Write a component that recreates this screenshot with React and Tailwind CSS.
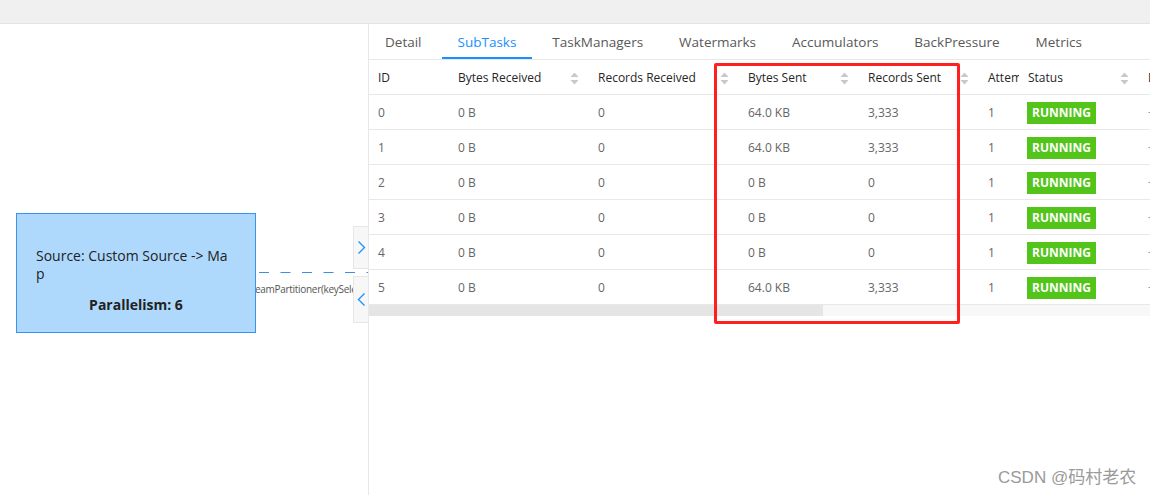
import React from "react";

const F = { fontFamily: '"Open Sans", "Noto Sans", sans-serif' };

function SortIcon() {
  return (
    <svg width="9" height="13" viewBox="0 0 9 13" className="shrink-0">
      <path d="M4.5 0.5 L8.5 5 L0.5 5 Z" fill="#c8c8c8" />
      <path d="M0.5 8 L8.5 8 L4.5 12.5 Z" fill="#c8c8c8" />
    </svg>
  );
}

const cols = [
  { label: "ID", sort: false },
  { label: "Bytes Received", sort: true },
  { label: "Records Received", sort: true },
  { label: "Bytes Sent", sort: true },
  { label: "Records Sent", sort: true },
  { label: "Attempt", sort: false, clip: true },
  { label: "Status", sort: true },
  { label: "Duration", sort: false },
];

const rows = [
  ["0", "0 B", "0", "64.0 KB", "3,333"],
  ["1", "0 B", "0", "64.0 KB", "3,333"],
  ["2", "0 B", "0", "0 B", "0"],
  ["3", "0 B", "0", "0 B", "0"],
  ["4", "0 B", "0", "0 B", "0"],
  ["5", "0 B", "0", "64.0 KB", "3,333"],
];

const tabs = ["Detail", "SubTasks", "TaskManagers", "Watermarks", "Accumulators", "BackPressure", "Metrics"];

const grid = "grid grid-cols-[80px_140px_150px_120px_120px_40px_120px_60px] w-[830px]";

export default function App() {
  return (
    <div className="w-[1150px] h-[495px] bg-white flex flex-col overflow-hidden relative" style={F}>
      <div className="h-[24px] shrink-0 bg-[#f0f0f0] border-b border-[#e4e4e4]" />
      <div className="flex flex-1 min-h-0">
        {/* diagram canvas */}
        <div className="w-[369px] shrink-0 relative overflow-hidden border-r border-[#e8e8e8]">
          <svg className="absolute left-[256px] top-[248px]" width="112" height="1">
            <line x1="3" y1="0.5" x2="112" y2="0.5" stroke="#3a8ee6" strokeWidth="1" strokeDasharray="10 11.5" />
          </svg>
          <div className="absolute left-[255px] top-[258px] text-[10px] tracking-[-0.3px] leading-[14px] text-[#555] whitespace-nowrap">
            eamPartitioner(keySelector)
          </div>
          <div className="absolute left-[16px] top-[189px] w-[240px] h-[120px] bg-[#aed9fd] border border-[#3b93f0] flex flex-col px-[19px] pt-[33px]">
            <div className="text-[14px] leading-[18px] text-[#222]">
              Source: Custom Source -&gt; Ma
              <br />p
            </div>
            <div className="text-[14px] leading-[18px] text-[#222] font-bold text-center mt-[13px]">Parallelism: 6</div>
          </div>
          <div className="absolute left-[353px] top-[202px] w-[16px] h-[43px] bg-[#f7f7f7] border border-[#e6e6e6] border-r-0 flex items-center justify-center">
            <svg width="9" height="15" viewBox="0 0 9 15">
              <path d="M1.5 1.5 L7.5 7.5 L1.5 13.5" fill="none" stroke="#1890ff" strokeWidth="1.3" />
            </svg>
          </div>
          <div className="absolute left-[353px] top-[252px] w-[16px] h-[47px] bg-[#f7f7f7] border border-[#e6e6e6] border-r-0 flex items-center justify-center">
            <svg width="9" height="15" viewBox="0 0 9 15">
              <path d="M7.5 1.5 L1.5 7.5 L7.5 13.5" fill="none" stroke="#1890ff" strokeWidth="1.3" />
            </svg>
          </div>
        </div>

        {/* right panel */}
        <div className="flex-1 min-w-0 flex flex-col overflow-hidden">
          <div className="h-[36px] shrink-0 flex border-b border-[#e8e8e8]">
            {tabs.map((t) => {
              const active = t === "SubTasks";
              return (
                <div
                  key={t}
                  className={
                    "h-full px-[16px] mr-[4px] pt-[3px] flex items-center text-[13.5px] border-b-2 " +
                    (active
                      ? "text-[#1890ff] border-[#1890ff] font-medium"
                      : "text-[#595959] border-transparent")
                  }
                >
                  {t}
                </div>
              );
            })}
          </div>
          <div className="overflow-hidden">
            <div className={grid + " h-[35px] border-b border-[#e8e8e8]"}>
              {cols.map((c) => (
                <div
                  key={c.label}
                  className="flex items-center justify-between pl-[9px] pr-[10px] pt-[2px] overflow-hidden text-[12px] text-[#262626]"
                >
                  <span className={c.clip ? "whitespace-nowrap -mr-[10px]" : "whitespace-nowrap"}>{c.label}</span>
                  {c.sort && <SortIcon />}
                </div>
              ))}
            </div>
            {rows.map((r) => (
              <div key={r[0]} className={grid + " h-[35px] border-b border-[#e8e8e8] text-[12px] text-[#666]"}>
                {r.map((v, i) => (
                  <div key={i} className="flex items-center pl-[9px] pt-[2px]">
                    {v}
                  </div>
                ))}
                <div className="flex items-center pl-[9px] pt-[2px]">1</div>
                <div className="flex items-center pl-[8px] pt-[1px]">
                  <span className="h-[22px] px-[5px] flex items-center bg-[#52c41a] text-white font-bold text-[12px]">
                    RUNNING
                  </span>
                </div>
                <div className="flex items-center pl-[9px] text-[#999]">-</div>
              </div>
            ))}
            <div className="h-[11px] bg-[#f8f8f8] w-full">
              <div className="h-full w-[454px] bg-[#e5e5e5]" />
            </div>
          </div>
        </div>
      </div>

      {/* highlight annotation */}
      <div className="absolute left-[714px] top-[63px] w-[246px] h-[261px] border-[3px] border-[#ff1f1f] rounded-[2px] pointer-events-none" />

      <div
        className="absolute left-[998px] top-[465px] text-[17px] text-[#9a9a9a] whitespace-nowrap"
        style={{ fontFamily: '"Liberation Sans", "Noto Sans CJK SC", sans-serif' }}
      >
        CSDN @码村老农
      </div>
    </div>
  );
}
